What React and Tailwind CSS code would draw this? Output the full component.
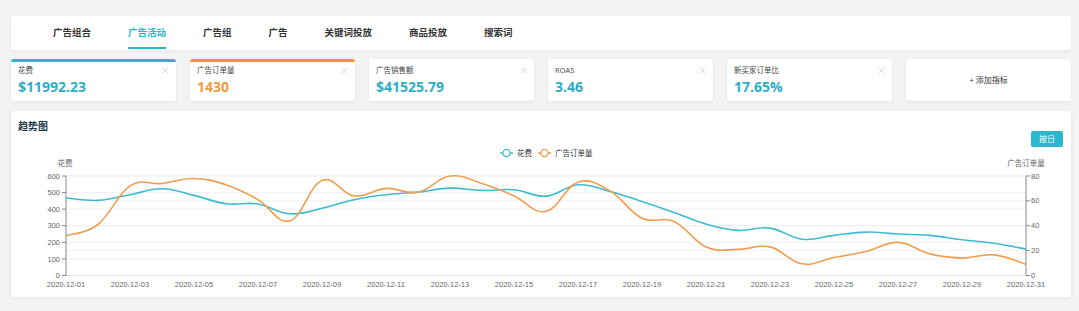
import React from 'react';
import { X } from 'lucide-react';

const CYAN = '#3dbccf';
const ORANGE = '#f09d4e';

const tabs = ['广告组合', '广告活动', '广告组', '广告', '关键词投放', '商品投放', '搜索词'];

const metrics = [
  { title: '花费', value: '$11992.23', bar: 'bg-[#2bb5cf]', color: 'text-[#2aafc9]' },
  { title: '广告订单量', value: '1430', bar: 'bg-[#f7922a]', color: 'text-[#f39a3a]' },
  { title: '广告销售额', value: '$41525.79', bar: 'bg-white', color: 'text-[#2aafc9]' },
  { title: 'ROAS', value: '3.46', bar: 'bg-white', color: 'text-[#2aafc9]' },
  { title: '新买家订单比', value: '17.65%', bar: 'bg-white', color: 'text-[#2aafc9]' },
];

const spend = [467, 453, 487, 523, 483, 433, 431, 372, 405, 457, 487, 503, 527, 513, 517, 479, 547, 507, 447, 380, 310, 272, 286, 219, 242, 262, 250, 242, 215, 195, 159];
const orders = [32, 41, 72, 74, 78, 73, 61, 44, 76.5, 64, 70, 67, 80, 74, 64, 51.5, 75, 68, 46, 43.5, 23, 21, 23, 9.4, 14.5, 19.3, 26.6, 17.4, 14, 16.6, 9];

const X0 = 66;
const STEP = 32;
const TOP = 176;
const BOTTOM = 275.5;

const yLeft = (v) => BOTTOM - (v / 600) * (BOTTOM - TOP);
const yRight = (v) => BOTTOM - (v / 80) * (BOTTOM - TOP);

function smoothPath(pts, s = 0.2) {
  let d = `M${pts[0][0]},${pts[0][1]}`;
  for (let i = 0; i < pts.length - 1; i++) {
    const p0 = pts[i - 1] || pts[i];
    const p1 = pts[i];
    const p2 = pts[i + 1];
    const p3 = pts[i + 2] || p2;
    const c1x = p1[0] + (p2[0] - p0[0]) * s;
    const c1y = p1[1] + (p2[1] - p0[1]) * s;
    const c2x = p2[0] - (p3[0] - p1[0]) * s;
    const c2y = p2[1] - (p3[1] - p1[1]) * s;
    d += ` C${c1x.toFixed(1)},${c1y.toFixed(1)} ${c2x.toFixed(1)},${c2y.toFixed(1)} ${p2[0]},${p2[1].toFixed(1)}`;
  }
  return d;
}

const TrendChart = () => {
  const leftTicks = [0, 100, 200, 300, 400, 500, 600];
  const rightTicks = [0, 20, 40, 60, 80];
  const dates = Array.from({ length: 16 }, (_, i) => i * 2 + 1);
  const spendPts = spend.map((v, i) => [X0 + i * STEP, yLeft(v)]);
  const orderPts = orders.map((v, i) => [X0 + i * STEP, yRight(v)]);

  return (
    <svg width="1060" height="148" viewBox="11 149 1060 148" className="block">
      <g fontFamily="'Liberation Sans', 'Noto Sans CJK SC', sans-serif" fontSize="7.5" fill="#666">
        {leftTicks.map((t) => (
          <line key={`l${t}`} x1={X0} x2={1026} y1={yLeft(t)} y2={yLeft(t)} stroke="#f1f1f1" strokeWidth="1" />
        ))}
        {rightTicks.map((t) => (
          <line key={`r${t}`} x1={X0} x2={1026} y1={yRight(t)} y2={yRight(t)} stroke="#f1f1f1" strokeWidth="1" />
        ))}
        <line x1={X0} x2={1026} y1={BOTTOM} y2={BOTTOM} stroke="#e2e2e2" />

        <line x1={X0} x2={X0} y1={TOP} y2={BOTTOM} stroke="#888" />
        {leftTicks.map((t) => (
          <g key={`lt${t}`}>
            <line x1={X0 - 4} x2={X0} y1={yLeft(t)} y2={yLeft(t)} stroke="#888" />
            <text x={X0 - 6} y={yLeft(t) + 2.6} textAnchor="end">{t}</text>
          </g>
        ))}
        <text x={65} y={165.5} textAnchor="middle">花费</text>

        <line x1={1026} x2={1026} y1={TOP} y2={BOTTOM} stroke="#888" />
        {rightTicks.map((t) => (
          <g key={`rt${t}`}>
            <line x1={1026} x2={1030} y1={yRight(t)} y2={yRight(t)} stroke="#888" />
            <text x={1031} y={yRight(t) + 2.6}>{t}</text>
          </g>
        ))}
        <text x={1026} y={165.5} textAnchor="middle">广告订单量</text>

        {dates.map((d) => (
          <text key={d} x={X0 + (d - 1) * STEP} y={286.5} textAnchor="middle">
            {`2020-12-${String(d).padStart(2, '0')}`}
          </text>
        ))}

        <path d={smoothPath(spendPts)} fill="none" stroke={CYAN} strokeWidth="1.6" />
        <path d={smoothPath(orderPts)} fill="none" stroke={ORANGE} strokeWidth="1.6" />

        <line x1={500} x2={513} y1={153} y2={153} stroke={CYAN} strokeWidth="1.5" />
        <circle cx={506.5} cy={153} r={3.6} fill="#fff" stroke={CYAN} strokeWidth="1.3" />
        <text x={517} y={155.6} fill="#333">花费</text>
        <line x1={538} x2={551} y1={153} y2={153} stroke={ORANGE} strokeWidth="1.5" />
        <circle cx={544.5} cy={153} r={3.6} fill="#fff" stroke={ORANGE} strokeWidth="1.3" />
        <text x={555} y={155.6} fill="#333">广告订单量</text>
      </g>
    </svg>
  );
};

const MetricCard = ({ title, value, bar, color }) => (
  <div className="flex h-[42px] flex-1 flex-col overflow-hidden rounded-[3px] bg-white shadow-[0_1px_4px_rgba(0,0,0,0.06)]">
    <div className={`h-[3px] ${bar}`} />
    <div className="flex items-center justify-between pl-[7px] pr-[6px] pt-[3px]">
      <span className="text-[7.5px] leading-[10px] text-[#444]">{title}</span>
      <X size={9} strokeWidth={1.5} className="text-[#bbb]" />
    </div>
    <p className={`mt-[3px] pl-[7px] text-[14px] font-bold leading-[18px] ${color}`}>{value}</p>
  </div>
);

export default function App() {
  return (
    <div className="min-h-[311px] bg-[#f2f3f5] px-[8px] pr-[8px] pt-4 font-['Open_Sans','Noto_Sans_CJK_SC',sans-serif]">
      <div className="ml-[3px]">
        <nav className="flex h-[34px] items-stretch gap-[37px] bg-white pl-[42px] shadow-[0_1px_4px_rgba(0,0,0,0.05)]">
          {tabs.map((t) => (
            <div
              key={t}
              className={`relative flex items-center text-[9.5px] font-bold ${t === '广告活动' ? 'text-[#2bb5cf]' : 'text-[#333]'}`}
            >
              {t}
              {t === '广告活动' && <span className="absolute bottom-[1px] left-0 h-[2px] w-full bg-[#2bb5cf]" />}
            </div>
          ))}
        </nav>

        <div className="mt-[9px] flex gap-[14px]">
          {metrics.map((m) => (
            <MetricCard key={m.title} {...m} />
          ))}
          <div className="flex h-[42px] flex-1 items-center justify-center rounded-[3px] bg-white text-[8px] text-[#333] shadow-[0_1px_4px_rgba(0,0,0,0.06)]">
            + 添加指标
          </div>
        </div>

        <section className="mt-[10px] h-[186px] rounded-[3px] bg-white shadow-[0_1px_5px_rgba(0,0,0,0.06)]">
          <div className="flex h-[38px] items-start justify-between pl-[7px] pr-[8px]">
            <h2 className="mt-[9px] text-[10px] font-bold leading-[12px] text-[#1e3a4b]">趋势图</h2>
            <button className="mt-[20px] h-[16px] w-[32px] rounded-[2px] bg-[#2db7cf] text-[8px] text-white">按日</button>
          </div>
          <TrendChart />
        </section>
      </div>
    </div>
  );
}
